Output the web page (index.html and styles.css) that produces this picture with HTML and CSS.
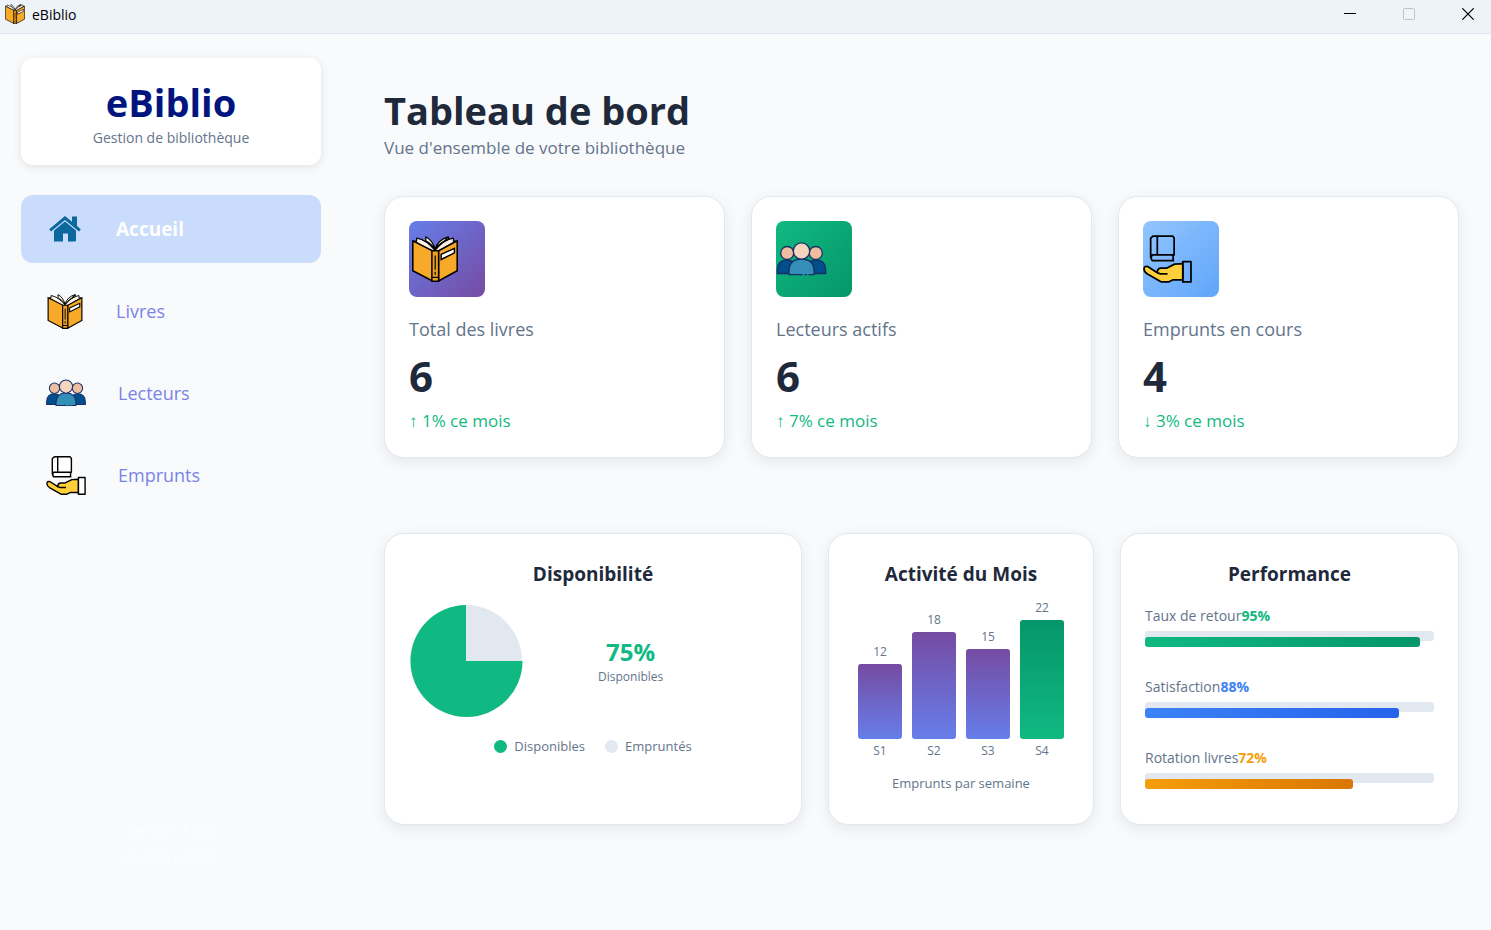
FILE: index.html
```html
<!DOCTYPE html>
<html lang="fr">
<head>
<meta charset="utf-8">
<title>eBiblio</title>
<link rel="stylesheet" href="styles.css">
</head>
<body>
<svg class="sprite" aria-hidden="true">
  <symbol id="book" viewBox="0 0 45 45">
    <g fill="#fdf3e3" stroke="#000" stroke-width="1.200" stroke-linejoin="round">
      <path d="M2 5 4.500 5 4.500 2Q14 3.500 22.500 14L20 15.500Z"/>
      <path d="M43 5 40.500 5 40.500 2Q31 3.500 22.500 14L25 15.500Z"/>
      <path d="M13.500 5 13.500 .8Q20 4 22.500 13Q18.500 7 13.500 5Z"/>
      <path d="M31.500 5 35.500 .8 36 3Q28 5.500 22.500 13Q25.500 3.500 35.500 .8Z"/>
    </g>
    <path d="M.8 4.800 20 14.500 20 44 .8 34Z" fill="#f7a928" stroke="#000" stroke-width="1.500"/>
    <path d="M44.200 4.800 26 14.500 26 44 44.200 34Z" fill="#f7a928" stroke="#000" stroke-width="1.500"/>
    <path d="M19.500 14.500H26V44.200H19.500Z" fill="#f09f22" stroke="#000" stroke-width="1.400"/>
    <path d="M22.700 19V33 M22.700 35V38 M19.500 40.500H26" stroke="#000" stroke-width="1.200" fill="none"/>
    <path d="M28.500 18 41.500 12V16.500L28.500 23Z" fill="#fff" stroke="#000" stroke-width="1.400"/>
  </symbol>
  <symbol id="people" viewBox="0 0 50 34">
    <g stroke="#182f66" stroke-width="1.300">
      <path d="M.8 31.500V28Q1 18 10.500 18 Q20 18 20 31.500Z M49.200 31.500V28Q49 18 39.500 18 Q30 18 30 31.500Z" fill="#004f8c"/>
      <circle cx="10.700" cy="11" r="6.500" fill="#ecbda0"/>
      <circle cx="39.300" cy="11" r="6.500" fill="#ecbda0"/>
      <path d="M12.500 32.700V28.500Q13 17 25 17 Q37 17 37.500 28.500V32.700Z" fill="#338eb8"/>
      <circle cx="25" cy="9" r="8.200" fill="#f6d5bf"/>
    </g>
    <path d="M26 32.700H28M30.500 32.700H32" stroke="#338eb8" stroke-width="1.500"/>
  </symbol>
  <symbol id="loan" viewBox="0 0 48 47">
    <g fill="none" stroke="#000" stroke-width="1.700" stroke-linejoin="round">
      <path class="loan-page" d="M10 1H29L30.500 3V19.500H9Q7.500 20 7.500 22V3Z M9 19.500Q7 22.500 9 25H30.500M29.500 19.500V25M14 1V19.500"/>
      <path d="M1 33Q1 30 5 31L14 37Q14 33 17 32.500L23 32.500 31 28.500 39 28V44L29 44 25 46H18L4 38Q1 36 1 33Z" fill="#ffd03b"/>
      <path d="M14 37 17 38H24"/>
      <path class="loan-page" d="M39 26H47V46H39Z"/>
    </g>
  </symbol>
  <symbol id="house" viewBox="0 0 32 26">
    <path d="M16 0 .2 13.200 2 15.500 16 4 30 15.500 31.800 13.200 28 10V.5H23V5.800Z" fill="#0b679e"/>
    <path d="M5 14.500 16 5.500 27 14.500V24.500Q27 25.500 26 25.500H19V17.500H14V25.500H5Z" fill="#0b679e"/>
  </symbol>
</svg>

<header class="titlebar">
  <svg class="titlebar-icon" aria-hidden="true"><use href="#book"/></svg>
  <span class="titlebar-name">eBiblio</span>
  <div class="window-controls">
    <button type="button" aria-label="Réduire"><svg viewBox="0 0 12 12"><path d="M0 5.500H12" stroke="#000"/></svg></button>
    <button type="button" aria-label="Agrandir" disabled><svg viewBox="0 0 12 12"><rect x=".5" y=".5" width="11" height="11" rx="1" fill="none" stroke="#bfc3c9"/></svg></button>
    <button type="button" aria-label="Fermer"><svg viewBox="0 0 12 12"><path d="M.3.3 11.700 11.700M11.700.3.3 11.700" stroke="#000" stroke-width="1.200"/></svg></button>
  </div>
</header>

<div class="layout">
  <aside class="sidebar">
    <div class="brand">
      <p class="brand-name">eBiblio</p>
      <p class="brand-tagline">Gestion de bibliothèque</p>
    </div>
    <nav class="nav">
      <a class="nav-item active" href="#accueil" aria-current="page"><svg class="nav-icon nav-icon-house" aria-hidden="true"><use href="#house"/></svg>Accueil</a>
      <a class="nav-item" href="#livres"><svg class="nav-icon nav-icon-book" aria-hidden="true"><use href="#book"/></svg>Livres</a>
      <a class="nav-item" href="#lecteurs"><svg class="nav-icon" aria-hidden="true"><use href="#people"/></svg>Lecteurs</a>
      <a class="nav-item" href="#emprunts"><svg class="nav-icon nav-icon-loan" aria-hidden="true"><use href="#loan"/></svg>Emprunts</a>
    </nav>
    <footer class="version">
      <p>Version 1.0.0</p>
      <p>© 2024 eBiblio</p>
    </footer>
  </aside>

  <main class="main">
    <h1>Tableau de bord</h1>
    <p class="subtitle">Vue d'ensemble de votre bibliothèque</p>

    <section class="stats">
      <article class="card">
        <div class="tile tile-books"><svg class="tile-book" aria-hidden="true"><use href="#book"/></svg></div>
        <p class="stat-label">Total des livres</p>
        <p class="stat-value">6</p>
        <p class="stat-change">↑ 1% ce mois</p>
      </article>
      <article class="card">
        <div class="tile tile-readers"><svg class="tile-people" aria-hidden="true"><use href="#people"/></svg></div>
        <p class="stat-label">Lecteurs actifs</p>
        <p class="stat-value">6</p>
        <p class="stat-change">↑ 7% ce mois</p>
      </article>
      <article class="card">
        <div class="tile tile-loans"><svg class="tile-loan" aria-hidden="true"><use href="#loan"/></svg></div>
        <p class="stat-label">Emprunts en cours</p>
        <p class="stat-value">4</p>
        <p class="stat-change">↓ 3% ce mois</p>
      </article>
    </section>

    <section class="panels">
      <article class="card">
        <h2>Disponibilité</h2>
        <div class="availability">
          <svg class="pie" viewBox="0 0 114 114" role="img" aria-label="75% disponibles">
            <circle cx="57" cy="57" r="56" fill="#e2e8f0"/>
            <path d="M57 57V1A56 56 0 1 0 113.500 57Z" fill="#10b981"/>
          </svg>
          <div class="availability-info">
            <p class="availability-rate">75%</p>
            <p class="small">Disponibles</p>
          </div>
        </div>
        <ul class="legend">
          <li><span class="dot dot-green"></span>Disponibles</li>
          <li><span class="dot"></span>Empruntés</li>
        </ul>
      </article>

      <article class="card">
        <h2>Activité du Mois</h2>
        <div class="chart">
          <div class="column"><span>12</span><div class="bar" style="height:75px"></div><span>S1</span></div>
          <div class="column"><span>18</span><div class="bar" style="height:107px"></div><span>S2</span></div>
          <div class="column"><span>15</span><div class="bar" style="height:90px"></div><span>S3</span></div>
          <div class="column"><span>22</span><div class="bar bar-best" style="height:119px"></div><span>S4</span></div>
        </div>
        <p class="chart-caption">Emprunts par semaine</p>
      </article>

      <article class="card">
        <h2>Performance</h2>
        <div class="metrics">
          <div class="metric metric-green">
            <p>Taux de retour<b>95%</b></p>
            <div class="track"></div><div class="fill" style="width:95%"></div>
          </div>
          <div class="metric metric-blue">
            <p>Satisfaction<b>88%</b></p>
            <div class="track"></div><div class="fill" style="width:88%"></div>
          </div>
          <div class="metric metric-orange">
            <p>Rotation livres<b>72%</b></p>
            <div class="track"></div><div class="fill" style="width:72%"></div>
          </div>
        </div>
      </article>
    </section>
  </main>
</div>
</body>
</html>
```
FILE: styles.css
```css
* { box-sizing: border-box; }

body {
  margin: 0;
  min-height: 100vh;
  display: flex;
  flex-direction: column;
  background: #f8fafc;
  color: #64748b;
  font-family: "Open Sans", "Noto Sans", sans-serif;
}

h1, h2, p, ul { margin: 0; padding: 0; }

.sprite { position: absolute; width: 0; height: 0; }

/* Title bar */
.titlebar {
  display: flex;
  align-items: flex-start;
  height: 34px;
  padding: 4px 0 0 5px;
  background: #eef3fa;
  border-bottom: 1px solid #dfe6ee;
}
.titlebar-icon { width: 20px; height: 20px; }
.titlebar-name { margin-left: 7px; font-size: 14px; line-height: 22px; color: #000; }
.window-controls { display: flex; gap: 13px; margin-left: auto; }
.window-controls button {
  display: grid;
  place-items: center;
  width: 46px;
  height: 20px;
  padding: 0;
  border: 0;
  background: none;
}
.window-controls svg { width: 12px; height: 12px; }

.layout { display: flex; flex: 1; }

/* Sidebar */
.sidebar {
  flex: none;
  display: flex;
  flex-direction: column;
  width: 321px;
  padding: 24px 0 60px 21px;
}
.brand {
  padding: 18px;
  border-radius: 12px;
  background: #fff;
  box-shadow: 0 2px 10px rgba(0, 0, 0, .1);
  text-align: center;
}
.brand-name { font-size: 38px; line-height: 52px; font-weight: 700; color: #02157f; }
.brand-tagline { font-size: 14px; line-height: 19px; }

.nav { display: flex; flex-direction: column; gap: 14px; margin-top: 30px; }
.nav-item {
  display: flex;
  align-items: center;
  gap: 32px;
  height: 68px;
  padding-left: 25px;
  border-radius: 12px;
  color: #7c83e6;
  font-size: 18px;
  text-decoration: none;
}
.nav-item.active { background: #c9dcfc; color: #fff; font-size: 19px; font-weight: 700; }
.nav-icon { width: 40px; height: 28px; }
.nav-icon-house { width: 38px; height: 26px; }
.nav-icon-book { width: 38px; height: 35px; }
.nav-icon-loan { height: 39px; --page: #fff; }
.loan-page { fill: var(--page, none); }

.version { margin-top: auto; text-align: center; font-size: 14px; line-height: 26px; color: #fdfeff; }

/* Main area */
.main { flex: 1; min-width: 0; padding: 50px 32px 40px 63px; }
h1 { font-size: 38px; line-height: 52px; font-weight: 700; color: #1e293b; }
.subtitle { font-size: 17px; line-height: 24px; }

.card {
  padding: 24px;
  border: 1px solid #e2e8f0;
  border-radius: 20px;
  background: #fff;
  box-shadow: 0 4px 15px rgba(0, 0, 0, .08);
}

.stats { display: grid; grid-template-columns: repeat(3, 1fr); gap: 26px; margin-top: 36px; }
.tile { display: flex; width: 76px; height: 76px; border-radius: 8px; align-items: center; }
.tile-books { padding-left: 3px; background: linear-gradient(135deg, #667eea, #764ba2); }
.tile-readers { background: linear-gradient(135deg, #10b981, #059669); }
.tile-loans { background: linear-gradient(135deg, #93c5fd, #60a5fa); }
.tile-book { width: 46px; height: 46px; }
.tile-people { width: 51px; height: 34px; }
.tile-loan { width: 49px; height: 48px; }
.stat-label { margin-top: 19px; font-size: 18px; line-height: 26px; }
.stat-value { margin-top: 10px; font-size: 42px; line-height: 48px; font-weight: 700; color: #1e293b; }
.stat-change { margin-top: 9px; font-size: 17px; line-height: 24px; color: #10b981; }

.panels { display: grid; grid-template-columns: 418fr 266fr 339fr; gap: 26px; margin-top: 75px; }
.panels .card { padding-top: 26px; }
h2 { font-size: 19px; line-height: 28px; font-weight: 700; color: #1e293b; text-align: center; }

.availability { display: flex; align-items: center; gap: 75px; margin-top: 16px; }
.pie { width: 114px; height: 114px; }
.availability-info { text-align: center; }
.availability-rate { font-size: 24px; line-height: 32px; font-weight: 700; color: #10b981; }
.small { font-size: 12px; line-height: 18px; }
.legend {
  display: flex;
  justify-content: center;
  gap: 20px;
  margin-top: 18px;
  list-style: none;
  font-size: 13px;
  line-height: 20px;
}
.legend li { display: flex; align-items: center; gap: 7px; }
.dot { width: 13px; height: 13px; border-radius: 50%; background: #e2e8f0; }
.dot-green { background: #10b981; }

.chart { display: flex; justify-content: center; align-items: flex-end; gap: 10px; margin-top: 12px; font-size: 12px; line-height: 16px; }
.column { display: flex; flex-direction: column; align-items: center; gap: 4px; }
.bar { width: 44px; border-radius: 3px; background: linear-gradient(#764ba2, #667eea); }
.bar-best { background: linear-gradient(#059669, #10b981); }
.chart-caption { margin-top: 15px; font-size: 13px; line-height: 18px; text-align: center; }

.metrics { display: flex; flex-direction: column; gap: 30px; margin: 18px 0 11px; font-size: 14px; line-height: 20px; }
.metric b { color: var(--accent); }
.track { height: 10px; margin-top: 5px; border-radius: 3px; background: #e2e8f0; }
.fill { height: 10px; margin-top: -4px; border-radius: 3px; background: linear-gradient(90deg, var(--accent), var(--accent-end)); }
.metric-green { --accent: #10b981; --accent-end: #059669; }
.metric-blue { --accent: #3b82f6; --accent-end: #2563eb; }
.metric-orange { --accent: #f59e0b; --accent-end: #d97706; }
```
